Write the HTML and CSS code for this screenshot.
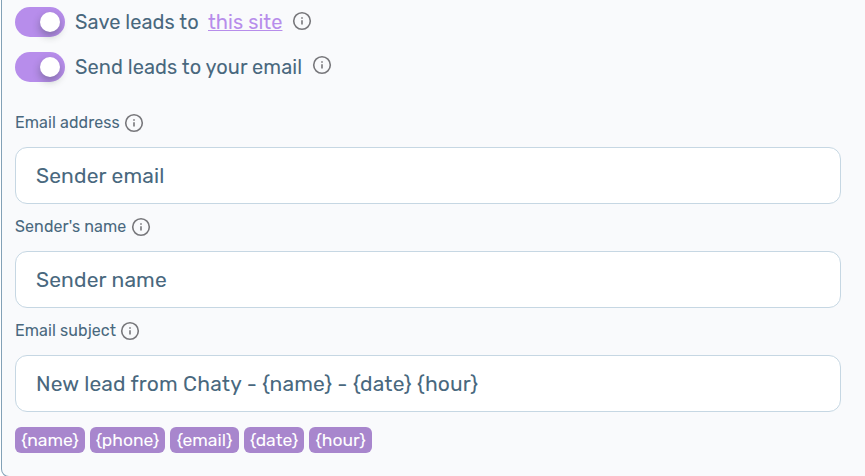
FILE: index.html
```html
<!DOCTYPE html>
<html lang="en">
<head>
<meta charset="utf-8">
<title>Lead settings</title>
<link rel="stylesheet" href="styles.css">
</head>
<body>
<svg width="0" height="0" class="defs"><symbol id="info" viewBox="0 0 20 20"><circle cx="10" cy="10" r="8.3" fill="none" stroke="currentColor" stroke-width="1.6"/><path d="M10 9.2v4.3M10 6.2v1.5" fill="none" stroke="currentColor" stroke-width="1.6"/></symbol></svg>
<main class="panel">
  <div class="option">
    <span class="switch"><span class="knob"></span></span>
    <span class="text t-save">Save leads to</span>
    <a class="text t-site">this site</a>
    <svg class="info"><use href="#info"/></svg>
  </div>
  <div class="option">
    <span class="switch"><span class="knob"></span></span>
    <span class="text t-send">Send leads to your email</span>
    <svg class="info high"><use href="#info"/></svg>
  </div>
  <div class="fields">
    <div class="field">
      <div class="label"><span class="l-address">Email address</span><svg class="info"><use href="#info"/></svg></div>
      <div class="input">Sender email</div>
    </div>
    <div class="field">
      <div class="label"><span class="l-name">Sender's name</span><svg class="info"><use href="#info"/></svg></div>
      <div class="input">Sender name</div>
    </div>
    <div class="field">
      <div class="label"><span class="l-subject">Email subject</span><svg class="info"><use href="#info"/></svg></div>
      <div class="input">New lead from Chaty - {name} - {date} {hour}</div>
    </div>
  </div>
  <div class="tags">
    <span class="tag w-name">{name}</span>
    <span class="tag w-phone">{phone}</span>
    <span class="tag w-email">{email}</span>
    <span class="tag w-date">{date}</span>
    <span class="tag w-hour">{hour}</span>
  </div>
</main>
</body>
</html>
```
FILE: styles.css
```css
* { box-sizing: border-box; }
body { margin: 0; height: 476px; overflow: hidden; background: #fff; color: #49687e; font-family: Rubik, Roboto, sans-serif; }
.defs { display: block; }
.panel { width: 880px; height: 477px; margin-left: 1px; padding: 7px 0 0 13px; background: #f9fafc; border: 1px solid #83a1b7; border-top: 0; border-radius: 0 0 8px 8px; }
.option { display: flex; align-items: center; height: 30px; margin-bottom: 15px; font-size: 20px; letter-spacing: .05px; }
.switch { width: 50px; height: 30px; margin-right: 10px; padding: 5px; border-radius: 15px; background: #b78deb; display: flex; justify-content: flex-end; flex: none; }
.knob { width: 20px; height: 20px; border-radius: 50%; background: #fff; box-shadow: 0 4px 8px rgba(0, 35, 11, .3); }
.text { flex: none; white-space: nowrap; line-height: 30px; }
.t-save { width: 133px; }
.t-site { width: 74px; color: #b78deb; text-decoration: underline; text-decoration-thickness: 1px; text-underline-offset: 1px; }
.t-send { width: 227px; }
.info { width: 20px; height: 20px; flex: none; color: #77777b; }
.option .info { margin: -2px 0 0 10px; }
.option .high { margin-top: -4px; }
.fields { margin-top: 22px; }
.field { height: 104px; }
.label { display: flex; align-items: center; height: 37px; font-size: 16px; letter-spacing: .1px; gap: 4px; }
.label span { flex: none; white-space: nowrap; }
.l-address { width: 105px; }
.l-name { width: 112px; }
.l-subject { width: 101px; }
.input { width: 826px; height: 57px; padding: 0 20px; margin-top: 6px; border: 1px solid #c6d7e3; border-radius: 12px; background: #fff; font-size: 21px; letter-spacing: .15px; line-height: 55px; white-space: nowrap; }
.tags { display: flex; gap: 5px; margin-top: 11px; }
.tag { height: 26px; border-radius: 6px; background: #a886cd; color: #fff; font-size: 17.5px; line-height: 26px; text-align: center; }
.w-name { width: 70px; }
.w-phone { width: 75px; }
.w-email { width: 69px; }
.w-date { width: 60px; }
.w-hour { width: 63px; }
```
